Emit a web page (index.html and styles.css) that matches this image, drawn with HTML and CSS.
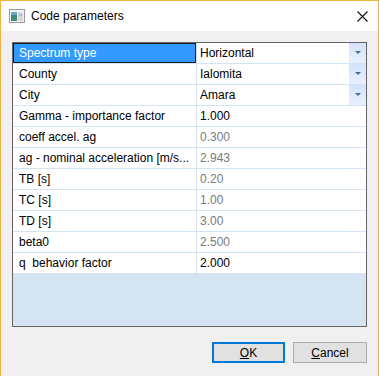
FILE: index.html
```html
<!DOCTYPE html>
<html lang="en">
<head>
    <meta charset="UTF-8">
    <title>Code parameters</title>
    <link rel="stylesheet" href="styles.css">
</head>
<body>
    <div class="window">
        <div class="titlebar">
            <svg class="app-icon" width="16" height="14" viewBox="0 0 16 14">
                <rect x="0.5" y="0.5" width="15" height="13" fill="#f4f4f4" stroke="#9a9a9a"/>
                <rect x="2" y="3" width="6" height="9" fill="#3f8d7a"/>
                <rect x="2" y="3" width="6" height="3" fill="#6fa8c8"/>
                <rect x="9" y="3" width="5" height="9" fill="#d8d8d8"/>
                <rect x="10" y="5" width="3" height="2" fill="#9fc8d8"/>
            </svg>
            <span class="title">Code parameters</span>
            <svg class="close" width="11" height="11" viewBox="0 0 11 11">
                <path d="M0.5 0.5 L10.5 10.5 M10.5 0.5 L0.5 10.5" stroke="#111" stroke-width="1.1"/>
            </svg>
        </div>

        <div class="content">
            <div class="grid">
                <div class="row">
                    <div class="cell label selected">Spectrum type</div>
                    <div class="cell value">Horizontal<span class="drop"></span></div>
                </div>
                <div class="row">
                    <div class="cell label">County</div>
                    <div class="cell value">Ialomita<span class="drop"></span></div>
                </div>
                <div class="row">
                    <div class="cell label">City</div>
                    <div class="cell value">Amara<span class="drop"></span></div>
                </div>
                <div class="row">
                    <div class="cell label">Gamma - importance factor</div>
                    <div class="cell value">1.000</div>
                </div>
                <div class="row">
                    <div class="cell label">coeff accel. ag</div>
                    <div class="cell value readonly">0.300</div>
                </div>
                <div class="row">
                    <div class="cell label">ag - nominal acceleration [m/s...</div>
                    <div class="cell value readonly">2.943</div>
                </div>
                <div class="row">
                    <div class="cell label">TB [s]</div>
                    <div class="cell value readonly">0.20</div>
                </div>
                <div class="row">
                    <div class="cell label">TC [s]</div>
                    <div class="cell value readonly">1.00</div>
                </div>
                <div class="row">
                    <div class="cell label">TD [s]</div>
                    <div class="cell value readonly">3.00</div>
                </div>
                <div class="row">
                    <div class="cell label">beta0</div>
                    <div class="cell value readonly">2.500</div>
                </div>
                <div class="row">
                    <div class="cell label">q&nbsp; behavior factor</div>
                    <div class="cell value">2.000</div>
                </div>
            </div>

            <div class="buttons">
                <button class="btn btn-default"><u>O</u>K</button>
                <button class="btn"><u>C</u>ancel</button>
            </div>
        </div>
    </div>
</body>
</html>
```

FILE: styles.css
```css
* {
    margin: 0;
    padding: 0;
    box-sizing: border-box;
}

body {
    font-family: 'Liberation Sans', 'Noto Sans', sans-serif;
    font-size: 12px;
    color: #000;
    background: #f0f0f0;
}

.window {
    width: 379px;
    height: 376px;
    border: 1px solid #f0b43c;
    border-bottom: none;
    background: #f0f0f0;
    display: flex;
    flex-direction: column;
}

.titlebar {
    height: 30px;
    background: #fff;
    display: flex;
    align-items: center;
    padding-left: 8px;
    padding-right: 10px;
}

.app-icon {
    margin-right: 6px;
}

.title {
    flex: 1;
    color: #000;
}

.content {
    flex: 1;
    padding: 11px;
    display: flex;
    flex-direction: column;
}

.grid {
    height: 285px;
    border: 1px solid #646464;
    background: #d5e4f2;
}

.row {
    display: flex;
    height: 21px;
    border-bottom: 1px solid #d5e4f2;
}

.cell {
    height: 20px;
    line-height: 20px;
    background: #fff;
    white-space: nowrap;
    overflow: hidden;
}

.label {
    width: 184px;
    padding-left: 6px;
    padding-right: 2px;
    border-right: 1px solid #d5e4f2;
    text-overflow: ellipsis;
}

.label.selected {
    background: #3399ff;
    color: #fff;
    box-shadow: inset 0 0 0 1px #1a1a1a;
}

.value {
    flex: 1;
    padding-left: 3px;
    position: relative;
}

.readonly {
    color: #7a7a7a;
}

.drop {
    position: absolute;
    right: 0;
    top: 0;
    width: 17px;
    height: 20px;
    background: linear-gradient(#d4e3fb, #e8f0fc);
}

.drop::after {
    content: '';
    position: absolute;
    left: 6px;
    top: 8px;
    border-left: 3px solid transparent;
    border-right: 3px solid transparent;
    border-top: 3px solid #4d6a8c;
}

.buttons {
    display: flex;
    justify-content: flex-end;
    gap: 8px;
    margin-top: 15px;
}

.btn {
    width: 74px;
    height: 21px;
    font-family: inherit;
    font-size: 12px;
    background: #e1e1e1;
    border: 1px solid #adadad;
    color: #000;
}

.btn-default {
    width: 73px;
    border: 2px solid #0078d7;
}
```
